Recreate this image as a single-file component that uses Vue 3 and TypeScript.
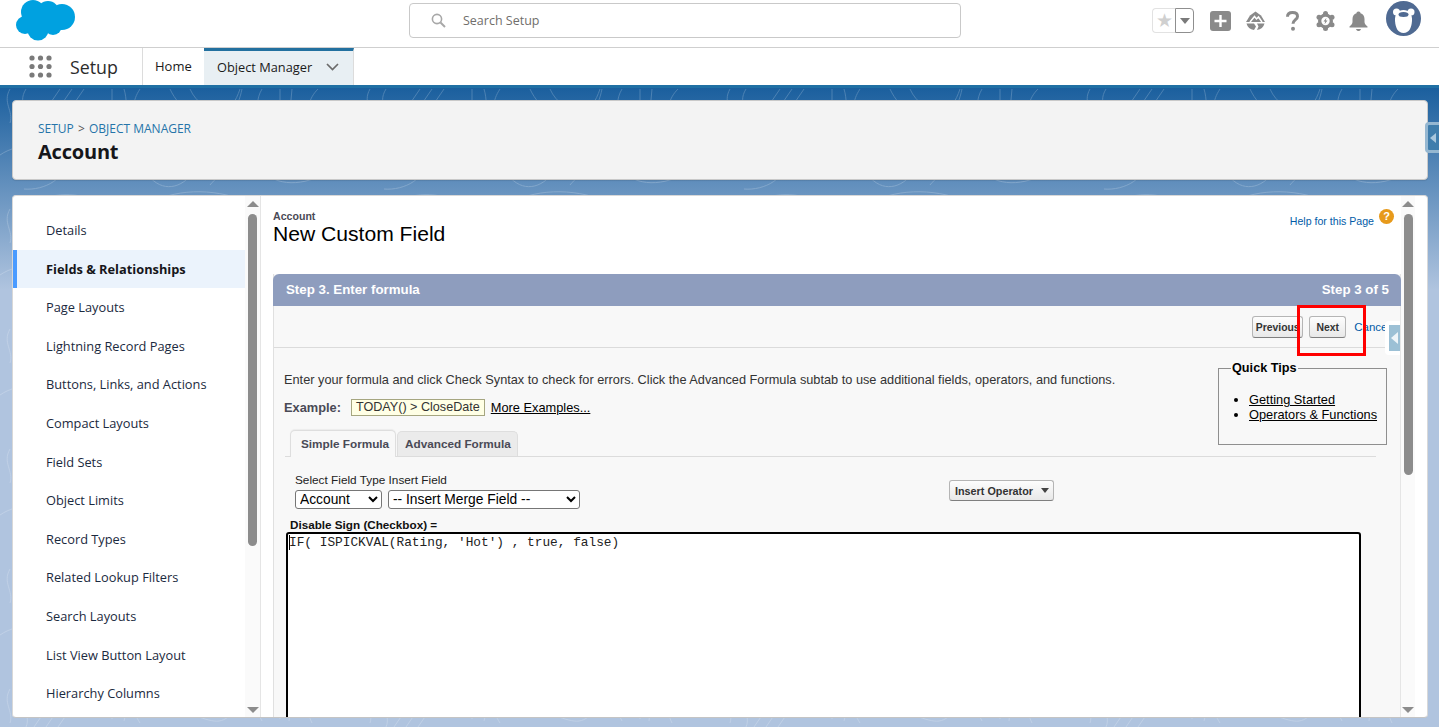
<script setup lang="ts">
const menu: string[] = [
  'Details', 'Fields & Relationships', 'Page Layouts', 'Lightning Record Pages',
  'Buttons, Links, and Actions', 'Compact Layouts', 'Field Sets', 'Object Limits',
  'Record Types', 'Related Lookup Filters', 'Search Layouts', 'List View Button Layout',
  'Hierarchy Columns'
]
const formula = "IF( ISPICKVAL(Rating, 'Hot') , true, false)"
</script>

<template>
  <div class="page">
    <header class="top">
      <svg class="cloud" width="60" height="41" viewBox="0 0 60 41" aria-hidden="true">
        <g fill="#00a1e0">
          <circle cx="17" cy="12" r="12" /><circle cx="32" cy="12" r="11" /><circle cx="46" cy="17" r="13" />
          <circle cx="9" cy="25" r="9" /><circle cx="22" cy="30" r="10.5" /><circle cx="37" cy="26" r="9" />
          <rect x="10" y="10" width="36" height="20" />
        </g>
      </svg>
      <div class="search">
        <svg width="15" height="15" viewBox="0 0 15 15" fill="none" stroke="#a8a8a8" stroke-width="1.6" aria-hidden="true"><circle cx="6" cy="6" r="4.6" /><path d="M9.5 9.5L14 14" stroke-width="2" /></svg>
        <span>Search Setup</span>
      </div>
      <div class="tools">
        <div class="fav">
          <span class="fav-star">★</span>
          <span class="fav-drop"><i></i></span>
        </div>
        <svg class="i-plus" width="21" height="20" viewBox="0 0 21 20" aria-hidden="true"><rect width="21" height="20" rx="3" fill="#8a8a8a" /><path d="M10.5 4v12M4.500 10h12" stroke="#fff" stroke-width="2.400" /></svg>
        <svg class="i-trail" width="21" height="20" viewBox="0 0 21 20" aria-hidden="true"><path d="M10.500 0.500L16 4.500L20 11H1L5 4.500Z" fill="#8a8a8a" /><path d="M5 11L9.500 5.500L11.500 8L13.500 6L17 11" fill="none" stroke="#fff" stroke-width="1.500" /><path d="M1.500 12.500H9L11 15.500L9 19C5 18.500 2.500 16 1.500 12.500ZM12 12.500H19.500C18.500 16 16 18.500 12 19L13.500 15.500Z" fill="#8a8a8a" /></svg>
        <svg class="i-help" width="13" height="20" viewBox="0 0 13 20" aria-hidden="true"><path d="M1.500 5.800C1.500 2.800 3.800 1.500 6.500 1.500C9.500 1.500 11.500 3 11.500 5.400C11.500 8.500 7 8.800 7 12.800" fill="none" stroke="#8a8a8a" stroke-width="3" /><circle cx="7" cy="17.800" r="2" fill="#8a8a8a" /></svg>
        <svg class="i-gear" width="19" height="20" viewBox="0 0 19 20" aria-hidden="true">
          <g fill="#8a8a8a">
            <circle cx="9.500" cy="2.500" r="2.500" /><circle cx="9.500" cy="17.500" r="2.500" />
            <circle cx="3" cy="6.200" r="2.500" /><circle cx="16" cy="6.200" r="2.500" />
            <circle cx="3" cy="13.800" r="2.500" /><circle cx="16" cy="13.800" r="2.500" />
            <circle cx="9.500" cy="10" r="7.500" />
          </g>
          <circle cx="9.500" cy="10" r="4.200" fill="#fff" />
          <path d="M10.500 6.800L7.500 10.500H9.300L8.500 13.200L11.500 9.500H9.700Z" fill="#8a8a8a" />
        </svg>
        <svg class="i-bell" width="19" height="20" viewBox="0 0 19 20" aria-hidden="true"><path d="M9.500 0.500C11 0.500 11.500 1.500 11.500 2.300C14 3 15.500 5.200 15.500 8V11C15.500 13 17 14 18.500 15.500V16.500H0.500V15.500C2 14 3.500 13 3.500 11V8C3.500 5.200 5 3 7.500 2.300C7.500 1.500 8 0.500 9.500 0.500Z" fill="#8a8a8a" /><path d="M7 18H12C11.500 19.500 10.500 20 9.500 20S7.500 19.500 7 18Z" fill="#8a8a8a" /></svg>
        <svg class="i-bear" width="35" height="35" viewBox="0 0 35 35" aria-hidden="true"><circle cx="17.500" cy="17.500" r="17.500" fill="#4f6a92" /><circle cx="10.500" cy="11" r="3.500" fill="#fff" /><circle cx="25" cy="11" r="3.500" fill="#fff" /><path d="M17.500 9C23 9 26.500 13 26 20C25.500 27 23 32 17.500 32S9.500 27 9 20C8.500 13 12 9 17.500 9Z" fill="#fff" /><ellipse cx="17.500" cy="13.500" rx="5" ry="2.500" fill="#4f6a92" /></svg>
      </div>
    </header>

    <nav class="nav">
      <svg class="waffle" width="23" height="23" viewBox="0 0 23 23" aria-hidden="true">
        <g fill="#7a7a7a">
          <circle cx="3" cy="3" r="2.600" /><circle cx="11.500" cy="3" r="2.600" /><circle cx="20" cy="3" r="2.600" />
          <circle cx="3" cy="11.500" r="2.600" /><circle cx="11.500" cy="11.500" r="2.600" /><circle cx="20" cy="11.500" r="2.600" />
          <circle cx="3" cy="20" r="2.600" /><circle cx="11.500" cy="20" r="2.600" /><circle cx="20" cy="20" r="2.600" />
        </g>
      </svg>
      <span class="app">Setup</span>
      <a class="tab">Home</a>
      <a class="tab tab-on">Object Manager
        <svg width="13" height="8" viewBox="0 0 13 8" fill="none" stroke="#6b6b6b" stroke-width="1.700" aria-hidden="true"><path d="M1 1l5.500 5.500L12 1" /></svg>
      </a>
    </nav>

    <main class="stage">
      <svg class="contours" width="1439" height="642" aria-hidden="true">
        <defs>
          <pattern id="topo" width="360" height="120" patternUnits="userSpaceOnUse">
            <g fill="none" stroke="#fff" stroke-width="1">
              <path d="M10 4c-8 14 4 22 0 34M26 4c-10 16 6 24 0 38M60 4L34 42M72 4L46 42M84 4L58 42M112 4v30M124 4c3 10 3 22 0 32M140 4c-8 12-8 22 0 34" />
              <path d="M170 4c10 22 30 30 44 32s24-12 28-32M190 4c6 14 20 22 30 22s16-10 20-22M262 4c-6 10-6 22 0 32M280 4v30M292 4l-3 32M318 4c-10 10-12 22-6 34" />
              <path d="M0 70c20-14 50-10 60 6s-16 30-36 28M90 90c14-18 44-18 58 0s34 14 46-4M210 100c10-14 40-20 60-8s50 4 70-14M30 118c20-10 50-12 70 0M150 118c30-16 70-14 100 0" />
            </g>
          </pattern>
        </defs>
        <rect width="1439" height="642" fill="url(#topo)" opacity="0.2" />
      </svg>

      <section class="hero">
        <div class="crumbs"><a>SETUP</a> <span>&gt;</span> <a>OBJECT MANAGER</a></div>
        <h1>Account</h1>
        <div class="hero-tab"><i></i></div>
      </section>

      <section class="card">
        <aside class="side">
          <ul class="menu">
            <li v-for="(m, i) in menu" :key="m" :class="{ active: i === 1 }">{{ m }}</li>
          </ul>
          <div class="bar">
            <i class="up"></i>
            <b class="thumb thumb-a"></b>
            <span class="fill"></span>
            <i class="down"></i>
          </div>
        </aside>

        <div class="main">
          <div class="title-row">
            <div>
              <div class="obj">Account</div>
              <div class="pagetitle">New Custom Field</div>
            </div>
            <a class="help">Help for this Page <span class="q">?</span></a>
          </div>

          <div class="form">
            <div class="band"><span>Step 3. Enter formula</span><span>Step 3 of 5</span></div>
            <div class="actions">
              <button class="btn b-prev">Previous</button>
              <button class="btn b-next">Next</button>
              <a class="cancel">Cancel</a>
              <span class="redbox"></span>
              <span class="handle"><i></i></span>
            </div>
            <div class="body">
              <fieldset class="tips">
                <legend>Quick Tips</legend>
                <ul>
                  <li><a>Getting Started</a></li>
                  <li><a>Operators &amp; Functions</a></li>
                </ul>
              </fieldset>
              <p class="intro">Enter your formula and click Check Syntax to check for errors. Click the Advanced Formula subtab to use additional fields, operators, and functions.</p>
              <p class="example"><b>Example:</b><span class="sample">TODAY() &gt; CloseDate</span><a>More Examples...</a></p>
              <div class="tabs">
                <div class="tabs-in">
                  <span class="ft ft-on">Simple Formula</span>
                  <span class="ft">Advanced Formula</span>
                </div>
              </div>
              <div class="pick">
                <div>
                  <div class="pick-label">Select Field Type Insert Field</div>
                  <div class="selects">
                    <select class="s1"><option>Account</option></select>
                    <select class="s2"><option>-- Insert Merge Field --</option></select>
                  </div>
                </div>
                <button class="op">Insert Operator <i></i></button>
              </div>
              <div class="fname">Disable Sign (Checkbox) =</div>
              <div class="editor"><span class="caret"></span>{{ formula }}</div>
            </div>
          </div>
        </div>

        <div class="bar bar-main">
          <i class="up"></i>
          <b class="thumb thumb-b"></b>
          <span class="fill"></span>
          <i class="down"></i>
        </div>
      </section>
    </main>
  </div>
</template>

<style>
html, body { margin: 0; background: #b0c4df; }
</style>

<style scoped>
.page { width: 1439px; height: 727px; overflow: hidden; display: flex; flex-direction: column; font-family: "Liberation Sans", Arial, sans-serif; color: #000; background: #fff; }
.top { height: 47px; flex: none; border-bottom: 1px solid #cfcfcf; display: flex; align-items: flex-start; }
.cloud { margin-left: 16px; flex: none; }
.search { margin: 3px 0 0 333px; width: 550px; height: 33px; border: 1px solid #c9c9c9; border-radius: 4px; display: flex; align-items: center; font-family: "Open Sans", sans-serif; font-size: 12.500px; color: #706e6b; }
.search svg { margin-left: 21px; margin-right: 17px; }
.tools { margin-left: 191px; display: flex; align-items: flex-start; }
.fav { display: flex; margin-top: 8px; height: 25px; width: 42px; }
.fav-star { width: 23px; border: 1px solid #e2e2e2; border-right: 0; border-radius: 4px 0 0 4px; color: #d0d0d0; font-size: 19px; line-height: 23px; text-align: center; }
.fav-drop { width: 17px; border: 1px solid #8f8f8f; border-radius: 0 4px 4px 0; display: flex; align-items: center; justify-content: center; }
.fav-drop i { border: 5px solid transparent; border-top: 6px solid #7a7a7a; border-bottom: 0; }
.i-plus { margin: 11px 0 0 16px; }
.i-trail { margin: 11px 0 0 14px; }
.i-help { margin: 11px 0 0 20px; }
.i-gear { margin: 11px 0 0 17px; }
.i-bell { margin: 11px 0 0 14px; }
.i-bear { margin: 1px 0 0 18px; }

.nav { height: 37px; flex: none; display: flex; align-items: stretch; font-family: "Open Sans", sans-serif; font-size: 13px; color: #1a1a1a; }
.waffle { margin: 7px 0 0 29px; }
.app { margin-left: 18px; width: 72px; font-size: 17.800px; line-height: 39px; color: #2b2b2b; }
.tab { border-left: 1px solid #dcdcdc; padding: 0 12px; line-height: 36px; box-sizing: border-box; width: 62px; }
.tab-on { width: 150px; font-size: 12.800px; background: #e8eff3; border-top: 3px solid #22709f; border-right: 1px solid #dcdcdc; border-left: 0; padding: 0 0 2px 13px; line-height: 30px; display: flex; align-items: center; gap: 14px; }

.stage { flex: 1; min-height: 0; position: relative; padding: 15px 11px 9px 12px; display: flex; flex-direction: column; gap: 15px; background: linear-gradient(#2070a4 0, #2070a4 3px, #1b5f9e 3px, #b0c4df 205px); }
.contours { position: absolute; left: 0; top: 0; }
.hero { position: relative; height: 80px; flex: none; box-sizing: border-box; background: #f3f3f3; border: 1px solid #c9c9c9; border-radius: 4px; padding: 21px 0 0 25px; box-shadow: 0 1px 1px rgba(0,0,0,.1); }
.crumbs { font-family: "Open Sans", sans-serif; font-size: 12px; line-height: 14px; color: #555; }
.crumbs a { color: #2574a9; }
.crumbs span { margin: 0 1px; }
.hero h1 { margin: 4px 0 0; font-family: "Open Sans", sans-serif; font-weight: 700; font-size: 20px; line-height: 24px; color: #16161a; letter-spacing: -0.2px; }
.hero-tab { position: absolute; left: 1412px; top: 21px; width: 14px; height: 31px; box-sizing: border-box; border: 3px solid rgba(255,255,255,.45); border-right: 0; border-radius: 4px 0 0 4px; background: #3f7dac; display: flex; align-items: center; }
.hero-tab i { border: 5px solid transparent; border-right: 6px solid #a8c6dc; border-left: 0; margin-left: 2px; }

.card { flex: 1; min-height: 0; position: relative; display: flex; background: #fff; border: 1px solid #d8d8d8; border-bottom-color: #c4c4c4; border-radius: 4px; padding-right: 12px; overflow: hidden; }
.side { width: 247px; flex: none; display: flex; border-right: 1px solid #e5e5e5; }
.menu { list-style: none; margin: 0; padding: 15px 0 0; width: 232px; font-family: "Open Sans", sans-serif; font-size: 12.800px; }
.menu li { height: 38.600px; line-height: 38.600px; padding-top: 0; padding-left: 33px; color: #1b2a40; }
.menu li.active { font-weight: 700; background: #ebf3fc; border-left: 4px solid #4a9bff; padding-left: 29px; color: #16161a; }
.bar { width: 15px; flex: none; background: #fafafa; display: flex; flex-direction: column; align-items: center; padding: 5px 0 4px; box-sizing: border-box; }
.bar-main { width: 14px; }
.up { border: 6px solid transparent; border-bottom: 6px solid #8c8c8c; border-top: 0; }
.down { border: 6px solid transparent; border-top: 6px solid #8c8c8c; border-bottom: 0; }
.thumb { display: block; width: 9px; background: #8c8c8c; border-radius: 5px; margin-top: 7px; }
.thumb-a { height: 332px; }
.thumb-b { height: 261px; }
.fill { flex: 1; }

.main { flex: 1; min-width: 0; padding-left: 12px; overflow: hidden; }
.title-row { height: 78px; box-sizing: border-box; padding-top: 14px; display: flex; justify-content: space-between; }
.obj { font-size: 10.600px; font-weight: 700; line-height: 12px; color: #4a4a56; }
.pagetitle { font-size: 21.100px; line-height: 24px; }
.help { margin: -1px 7px 0 0; font-size: 10.600px; color: #015ba7; line-height: 24px; display: flex; align-items: flex-start; gap: 5px; }
.q { width: 15px; height: 15px; border-radius: 50%; background: #e79a1b; color: #fff; font-size: 11px; font-weight: 700; line-height: 15px; text-align: center; }
.form { background: #f8f8f8; border-left: 1px solid #e0e0e0; border-right: 1px solid #e5e5e5; position: relative; }
.band { height: 32px; margin: 0 -1px; background: #8e9dbe; border-radius: 6px 6px 0 0; display: flex; justify-content: space-between; align-items: center; padding: 0 12px 2px 13px; box-sizing: border-box; color: #fff; font-size: 13.300px; font-weight: 700; }
.actions { position: relative; border-bottom: 1px solid #dbdbdb; display: flex; justify-content: flex-end; align-items: flex-start; padding: 10px 10px 0 0; height: 31px; gap: 6px; }
.btn { font: 700 10.400px "Liberation Sans", Arial, sans-serif; color: #333; height: 22px; padding: 0; border: 1px solid #b5b5b5; border-bottom-color: #7f7f7f; border-radius: 3px; background: linear-gradient(#fdfdfd, #e8e8e8); }
.b-prev { width: 51px; }
.b-next { width: 37px; }
.cancel { font-size: 11.500px; color: #015ba7; line-height: 22px; margin-left: 2px; }
.redbox { position: absolute; left: 1023px; top: -1px; width: 69px; height: 51px; box-sizing: border-box; border: 3px solid #f00; }
.handle { position: absolute; right: 0; top: 15px; width: 15px; height: 34px; box-sizing: border-box; background: #fff; border-radius: 4px 0 0 4px; padding: 4px 0 4px 4px; display: block; }
.handle i { display: flex; height: 26px; background: #9cc0d5; align-items: center; }
.handle i::after { content: ""; border: 6px solid transparent; border-right: 7px solid #eef4f8; border-left: 0; margin-left: 2px; }

.body { padding: 18px 0 0 10px; height: 380px; }
.tips { float: right; width: 169px; height: 83px; box-sizing: border-box; margin: -4px 13px 0 0; padding: 0; border: 1px solid #8f8f8f; }
.tips legend { font-size: 12.700px; font-weight: 700; padding: 0 1px; margin-left: 12px; line-height: 13px; }
.tips ul { margin: 17px 0 0; padding: 0 0 0 30px; font-size: 12.800px; line-height: 15px; }
.tips a, .example a { text-decoration: underline; color: #000; }
.intro { margin: 0; font-size: 12.750px; line-height: 14px; color: #333; padding-top: 7px; }
.example { margin: 12px 0 0; display: flex; align-items: center; font-size: 12.800px; color: #333; height: 17px; }
.example b { color: #4a4a56; width: 67px; }
.sample { height: 17px; line-height: 15px; font-size: 12.600px; box-sizing: border-box; border: 1px solid #a6a680; background: #ffffe5; padding: 0 4px; margin-right: 6px; }
.tabs { margin: 14px 24px 0 1px; height: 26px; border-bottom: 1px solid #dcdcdc; }
.tabs-in { display: flex; align-items: flex-end; height: 26px; padding-left: 5px; gap: 1px; font-size: 11.750px; font-weight: 700; color: #4a4a56; }
.ft { height: 25px; line-height: 23px; padding: 0 7px; background: #ebebeb; border: 1px solid #dedede; border-bottom: 0; border-radius: 5px 5px 0 0; width: 121px; box-sizing: border-box; white-space: nowrap; }
.ft-on { height: 27px; line-height: 25px; width: 106px; background: #f8f8f8; margin-bottom: -1px; padding: 0 10px; box-shadow: 0 -1px 1px rgba(0,0,0,.05); }
.pick { margin: 16px 0 0 11px; display: flex; align-items: flex-start; height: 38px; }
.pick-label { font-size: 11.800px; line-height: 14px; color: #222; }
.selects { margin-top: 3px; display: flex; gap: 6px; }
select { height: 19px; box-sizing: border-box; font: 13.800px "Liberation Sans", Arial, sans-serif; padding: 0; background: #fff; border: 1px solid #767676; border-radius: 3px; color: #000; }
.s1 { width: 87px; }
.s2 { width: 192px; }
.op { margin: 7px 0 0 369px; width: 105px; height: 21px; font: 700 10.800px "Liberation Sans", Arial, sans-serif; color: #333; border: 1px solid #b5b5b5; border-bottom-color: #7f7f7f; border-radius: 3px; background: linear-gradient(#fdfdfd, #e8e8e8); display: flex; align-items: center; padding: 0 0 0 5px; gap: 6px; }
.op i { border: 4px solid transparent; border-top: 5px solid #444; border-bottom: 0; margin-left: 2px; }
.fname { margin: 7px 0 0 6px; font-size: 11.700px; font-weight: 700; line-height: 13px; color: #111; }
.editor { position: relative; margin: 1px 39px 0 2px; height: 400px; box-sizing: border-box; background: #fff; border: 2px solid #000; border-radius: 3px; padding: 2px 0 0 1px; font: 12.800px/14px "Liberation Mono", "Courier New", monospace; white-space: pre; color: #222; }
.caret { position: absolute; left: 1px; top: 1px; width: 1px; height: 15px; background: #000; }
</style>
